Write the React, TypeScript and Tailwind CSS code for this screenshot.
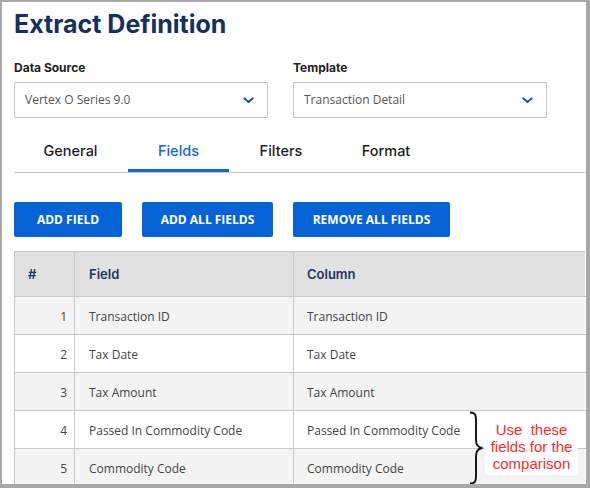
const tabs = [
  { label: 'General', width: 'w-[101px] ml-[6px]' },
  { label: 'Fields', width: 'w-[101px] ml-[7px]', active: true },
  { label: 'Filters', width: 'w-[104px]' },
  { label: 'Format', width: 'w-[106px]' },
];

const rows = [
  { n: 1, field: 'Transaction ID', column: 'Transaction ID' },
  { n: 2, field: 'Tax Date', column: 'Tax Date' },
  { n: 3, field: 'Tax Amount', column: 'Tax Amount' },
  { n: 4, field: 'Passed In Commodity Code', column: 'Passed In Commodity Code' },
  { n: 5, field: 'Commodity Code', column: 'Commodity Code' },
];

function Chevron() {
  return (
    <svg width="11" height="7" viewBox="0 0 11 7" className="shrink-0">
      <polyline points="1.5,1.5 5.5,5 9.5,1.5" fill="none" stroke="#23589f" strokeWidth="2.2" strokeLinecap="round" strokeLinejoin="round" />
    </svg>
  );
}

function SelectBox({ label, value }: { label: string; value: string }) {
  return (
    <div className="w-[254px]">
      <p className="font-['Inter'] text-[12px] leading-[16px] font-bold text-[#1e1e1e]">{label}</p>
      <div className="mt-[6px] h-[36px] border border-[#c4c4c4] flex items-center justify-between pl-[10px] pr-[13px]">
        <span className="font-['Open_Sans'] text-[12px] text-[#555]">{value}</span>
        <Chevron />
      </div>
    </div>
  );
}

export default function App() {
  return (
    <div className="w-[590px] h-[488px] bg-white border-t-2 border-l-2 border-r-4 border-b-4 border-[#a8a8a8] overflow-hidden">
      <div className="relative pl-[12px] pt-[7px]">
        <h1 className="font-['Inter'] text-[25px] leading-[30px] font-bold text-[#14305c]">
          Extract Definition
        </h1>

        {/* Selectors */}
        <div className="mt-[21px] flex gap-[25px]">
          <SelectBox label="Data Source" value="Vertex O Series 9.0" />
          <SelectBox label="Template" value="Transaction Detail" />
        </div>

        {/* Tabs */}
        <div className="mt-[14px] mr-[1px] flex border-b border-[#c8c8c8]">
          {tabs.map((t) => (
            <div
              key={t.label}
              className={`${t.width} h-[40px] flex items-center justify-center border-b-[3px] font-['Inter'] text-[14.5px] font-medium ${
                t.active ? 'border-[#1466d2] text-[#1466d2]' : 'border-transparent text-[#1e1e1e]'
              }`}
            >
              {t.label}
            </div>
          ))}
        </div>

        {/* Actions */}
        <div className="mt-[29px] flex gap-[20px] font-['Open_Sans'] text-[12px] font-bold text-white">
          <button className="h-[35px] w-[108px] rounded-[2px] bg-[#0563d6]">ADD FIELD</button>
          <button className="h-[35px] w-[131px] rounded-[2px] bg-[#0563d6]">ADD ALL FIELDS</button>
          <button className="h-[35px] w-[157px] rounded-[2px] bg-[#0563d6]">REMOVE ALL FIELDS</button>
        </div>

        {/* Table */}
        <div className="mt-[14px] w-[571px] border-t border-l border-[#c8c8c8]">
          <div className="grid grid-cols-[60px_219px_292px] h-[45px] bg-[#e1e1e1] font-['Inter'] text-[13px] font-semibold text-[#1b3560]">
            <div className="flex items-center pl-[13px] pt-[2px] border-r border-b border-[#c8c8c8]">#</div>
            <div className="flex items-center pl-[14px] pt-[2px] border-r border-b border-[#c8c8c8]">Field</div>
            <div className="flex items-center pl-[13px] pt-[2px] border-b border-[#c8c8c8]">Column</div>
          </div>
          {rows.map((r) => (
            <div
              key={r.n}
              className={`grid grid-cols-[60px_219px_292px] h-[38px] font-['Open_Sans'] text-[12px] text-[#444] ${
                r.n % 2 === 1 ? 'bg-[#f3f3f3]' : 'bg-white'
              }`}
            >
              <div className="flex items-center justify-end pr-[7px] pt-[2px] border-r border-b border-[#c8c8c8]">{r.n}</div>
              <div className="flex items-center pl-[14px] pt-[2px] border-r border-b border-[#c8c8c8]">{r.field}</div>
              <div className="flex items-center pl-[13px] pt-[2px] border-b border-[#c8c8c8]">{r.column}</div>
            </div>
          ))}
        </div>

        {/* Annotation */}
        <svg className="absolute left-[465px] top-[409px]" width="18" height="74" viewBox="0 0 18 74">
          <path
            d="M3 1.5 C8.5 1.5 9 4 9 10 L9 29 C9 34 11 36.5 15.5 37 C11 37.5 9 40 9 45 L9 64 C9 70 8.5 72.5 3 72.5"
            fill="none"
            stroke="#111"
            strokeWidth="1.9"
          />
        </svg>
        <div className="absolute left-[483px] top-[419px] w-[93px] bg-white pb-[3px] text-center font-['Liberation_Sans'] text-[15px] leading-[17px] text-[#ff2b2b] whitespace-pre">
          {'Use  these\nfields for the\ncomparison'}
        </div>
      </div>
    </div>
  );
}
